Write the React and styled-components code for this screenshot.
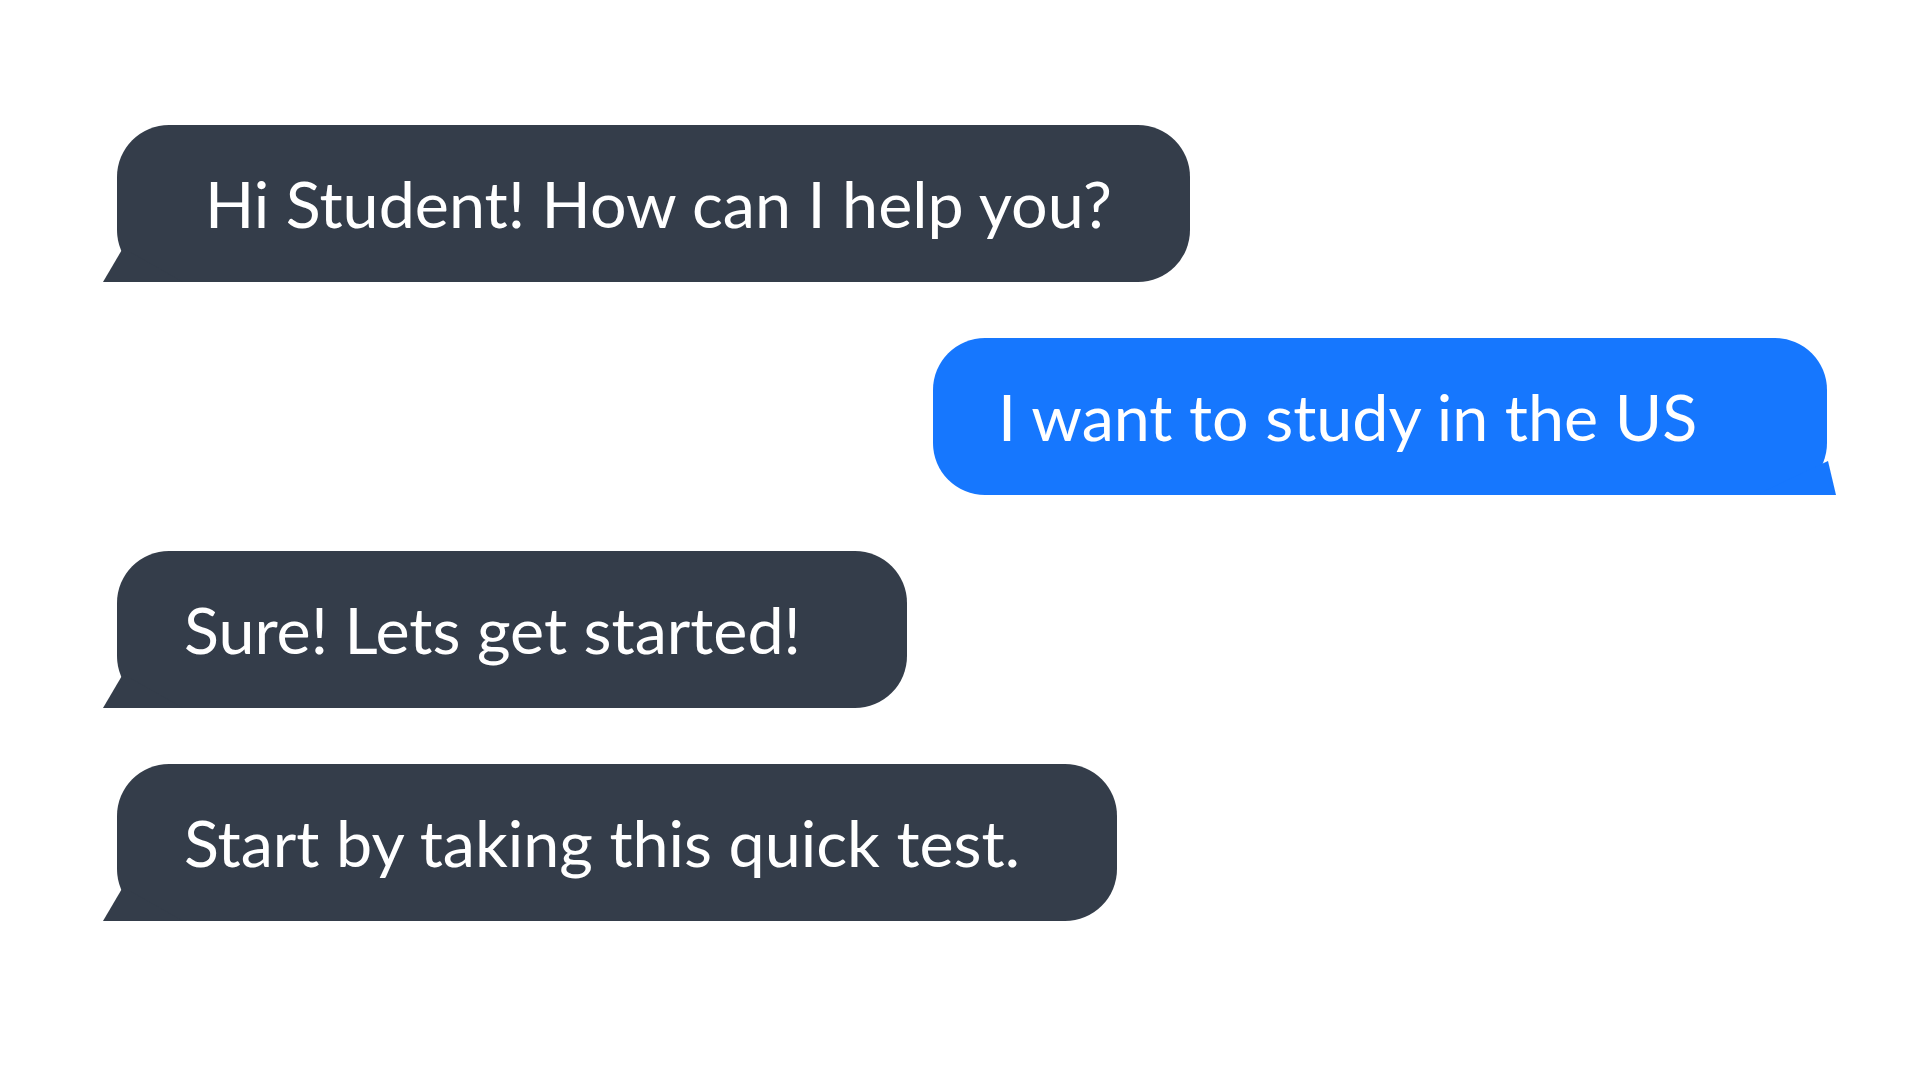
import React from "react";
import styled, { createGlobalStyle } from "styled-components";

const GlobalStyle = createGlobalStyle`
  html, body {
    margin: 0;
    padding: 0;
    background: #ffffff;
  }
  body {
    font-family: Lato, "Noto Sans", sans-serif;
  }
`;

const messages = [
  { id: 1, text: "Hi Student! How can I help you?", mine: false, width: 1073, padLeft: 88 },
  { id: 2, text: "I want to study in the US", mine: true, width: 894, padLeft: 65 },
  { id: 3, text: "Sure! Lets get started!", mine: false, width: 790, padLeft: 67 },
  { id: 4, text: "Start by taking this quick test.", mine: false, width: 1000, padLeft: 67 },
];

function App() {
  return (
    <Page>
      <GlobalStyle />
      <Thread>
        {messages.map((m) => (
          <Bubble key={m.id} $mine={m.mine} $width={m.width} $padLeft={m.padLeft}>
            {m.text}
          </Bubble>
        ))}
      </Thread>
    </Page>
  );
}

const Page = styled.div`
  width: 1920px;
  height: 1080px;
  background: #ffffff;
  overflow: hidden;
`;

const Thread = styled.div`
  display: flex;
  flex-direction: column;
  gap: 56px;
  padding: 125px 93px 0 117px;
`;

const Bubble = styled.div`
  position: relative;
  box-sizing: border-box;
  width: ${(p) => p.$width}px;
  height: 157px;
  display: flex;
  align-items: center;
  padding-left: ${(p) => p.$padLeft}px;
  align-self: ${(p) => (p.$mine ? "flex-end" : "flex-start")};
  border-radius: 52px;
  background: ${(p) => (p.$mine ? "#1677fe" : "#343d4a")};
  color: #ffffff;
  font-family: Lato, "Noto Sans", sans-serif;
  font-size: 64.6px;
  line-height: 1;
  white-space: nowrap;

  &::before {
    content: "";
    position: absolute;
    bottom: 0;
    width: 80px;
    height: 34px;
    background: inherit;
    ${(p) =>
      p.$mine
        ? `
      right: -9px;
      clip-path: polygon(72px 0, 80px 100%, 0 100%);
    `
        : `
      left: -14px;
      clip-path: polygon(20px 0, 0 100%, 80px 100%);
    `}
  }
`;

export default App;
